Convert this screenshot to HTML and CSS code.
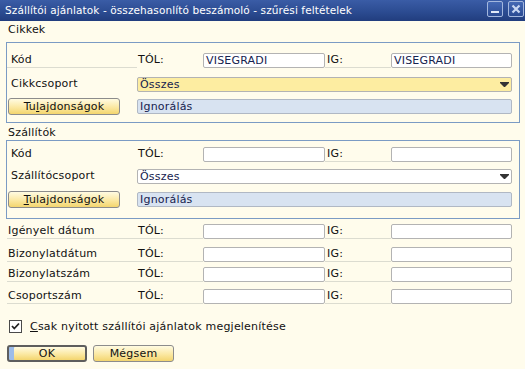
FILE: index.html
```html
<!DOCTYPE html>
<html lang="hu">
<head>
    <meta charset="UTF-8">
    <title>Szállítói ajánlatok - szűrési feltételek</title>
    <link rel="stylesheet" href="styles.css">
</head>
<body>
    <div class="window">
        <div class="titlebar">
            <span class="title">Szállítói ajánlatok - összehasonlító beszámoló - szűrési feltételek</span>
            <div class="tb-btns">
                <span class="tb-btn tb-min"></span>
                <span class="tb-btn tb-close">
                    <svg width="14" height="14" viewBox="0 0 14 14"><path d="M3.5 3.5 L10.5 10.5 M10.5 3.5 L3.5 10.5" stroke="#c8d6f2" stroke-width="2.2"/></svg>
                </span>
            </div>
        </div>

        <div class="section-title first">Cikkek</div>
        <div class="group group-cikk">
            <div class="row">
                <span class="lbl line">Kód</span>
                <span class="lbl tol">TÓL:</span>
                <span class="field">VISEGRADI</span>
                <span class="lbl ig line">IG:</span>
                <span class="field">VISEGRADI</span>
            </div>
            <div class="row gap-9">
                <span class="lbl">Cikkcsoport</span>
                <div class="field combo yellow wide">Összes
                    <svg class="arrow" width="9" height="5" viewBox="0 0 9 5"><path d="M0 0 H9 V1 L5 5 H4 L0 1 Z" fill="#333"/></svg>
                </div>
            </div>
            <div class="row tall gap-6">
                <button class="btn">Tu<u>l</u>ajdonságok</button>
                <div class="field blue wide">Ignorálás</div>
            </div>
        </div>

        <div class="section-title second">Szállítók</div>
        <div class="group group-szall">
            <div class="row">
                <span class="lbl">Kód</span>
                <span class="lbl tol">TÓL:</span>
                <span class="field"></span>
                <span class="lbl ig line">IG:</span>
                <span class="field"></span>
            </div>
            <div class="row gap-7">
                <span class="lbl">Szállítócsoport</span>
                <div class="field combo wide">Összes
                    <svg class="arrow" width="9" height="5" viewBox="0 0 9 5"><path d="M0 0 H9 V1 L5 5 H4 L0 1 Z" fill="#333"/></svg>
                </div>
            </div>
            <div class="row tall gap-7">
                <button class="btn"><u>T</u>ulajdonságok</button>
                <div class="field blue wide">Ignorálás</div>
            </div>
        </div>

        <div class="free-rows">
            <div class="row">
                <span class="lbl line">Igényelt dátum</span>
                <span class="lbl tol line">TÓL:</span>
                <span class="field"></span>
                <span class="lbl ig line">IG:</span>
                <span class="field"></span>
            </div>
            <div class="row gap-8">
                <span class="lbl line">Bizonylatdátum</span>
                <span class="lbl tol line">TÓL:</span>
                <span class="field"></span>
                <span class="lbl ig line">IG:</span>
                <span class="field"></span>
            </div>
            <div class="row gap-5">
                <span class="lbl line">Bizonylatszám</span>
                <span class="lbl tol line">TÓL:</span>
                <span class="field"></span>
                <span class="lbl ig line">IG:</span>
                <span class="field"></span>
            </div>
            <div class="row gap-7">
                <span class="lbl line">Csoportszám</span>
                <span class="lbl tol line">TÓL:</span>
                <span class="field"></span>
                <span class="lbl ig line">IG:</span>
                <span class="field"></span>
            </div>
        </div>

        <label class="check-row">
            <span class="checkbox">
                <svg width="13" height="13" viewBox="0 0 13 13"><path d="M3 6 L5.3 8.5 L10 3.5" stroke="#222" stroke-width="1.8" fill="none"/></svg>
            </span>
            <span><u>C</u>sak nyitott szállítói ajánlatok megjelenítése</span>
        </label>

        <div class="actions">
            <button class="btn btn-ok">OK</button>
            <button class="btn btn-cancel">Mégsem</button>
        </div>
    </div>
</body>
</html>
```

FILE: styles.css
```css
body {
    margin: 0;
    font-family: "DejaVu Sans", sans-serif;
    font-size: 11px;
    letter-spacing: 0.2px;
    color: #111;
    background-color: #fffcec;
}

.window {
    width: 525px;
    height: 369px;
    overflow: hidden;
    background-color: #fffcec;
}

/* title bar */
.titlebar {
    height: 21px;
    box-sizing: border-box;
    padding: 0 1px 0 5px;
    display: flex;
    justify-content: space-between;
    background: linear-gradient(#3a5ca6, #2c4c92 55%, #213d7e);
    color: #fff;
}

.title {
    font-size: 10.5px;
    letter-spacing: 0.1px;
    line-height: 21px;
}

.tb-btns {
    display: flex;
    gap: 5px;
    margin-top: 1px;
}

.tb-btn {
    position: relative;
    width: 14px;
    height: 14px;
    border: 1px solid #a3b7de;
    border-radius: 2px;
    background: linear-gradient(#4468b4, #2b4b93);
}

.tb-min::after {
    content: "";
    position: absolute;
    left: 3px;
    bottom: 3px;
    width: 8px;
    height: 2px;
    background-color: #e2eaf8;
}

.tb-close svg {
    display: block;
}

/* sections */
.section-title {
    box-sizing: border-box;
    padding: 2px 0 0 8px;
    line-height: 14px;
}

.section-title.first {
    height: 21px;
}

.section-title.second {
    height: 17px;
    padding-top: 3px;
}

.group {
    margin: 0 5px 0 6px;
    border: 1px solid #7b9bc4;
}

.group-cikk {
    padding: 10px 0 7px;
}

.group-szall {
    padding: 6px 0 10px;
}

.free-rows {
    padding: 5px 0 0 7px;
}

/* grid rows */
.row {
    display: grid;
    grid-template-columns: 130px 66px 122px 66px 121px;
    height: 15px;
    align-items: center;
}

.row.tall {
    height: 17px;
}

.gap-5 { margin-top: 5px; }
.gap-6 { margin-top: 6px; }
.gap-7 { margin-top: 7px; }
.gap-8 { margin-top: 8px; }
.gap-9 { margin-top: 9px; }

.lbl {
    height: 15px;
    box-sizing: border-box;
    line-height: 14px;
    white-space: nowrap;
    padding-left: 1px;
}

.group .lbl:first-child {
    padding-left: 4px;
}

.lbl.tol {
    padding-left: 1px;
}

.lbl.ig {
    padding-left: 2px;
}

.line {
    border-bottom: 1px solid #dcdcd0;
}

.field {
    height: 15px;
    box-sizing: border-box;
    border: 1px solid #b3b3b3;
    border-radius: 2px;
    background-color: #fff;
    padding-left: 2px;
    line-height: 13px;
    color: #16224f;
    white-space: nowrap;
}

.wide {
    grid-column: 2 / span 4;
}

.combo {
    position: relative;
}

.combo .arrow {
    position: absolute;
    right: 2px;
    top: 4px;
}

.yellow {
    background-color: #fdeda1;
}

.blue {
    background-color: #d8e3f1;
    border-color: #b0b8c4;
}

/* buttons */
.btn {
    width: 112px;
    height: 17px;
    margin-left: 1px;
    padding: 0;
    border: 1px solid #8c8c8c;
    border-radius: 3px;
    background: linear-gradient(#fffbe2, #fbe8a2 55%, #f3d56e);
    font: inherit;
    letter-spacing: 0.2px;
    color: #111;
    line-height: 14px;
}

.check-row {
    display: flex;
    align-items: center;
    gap: 8px;
    height: 13px;
    margin-top: 16px;
    padding-left: 9px;
}

.checkbox {
    width: 13px;
    height: 13px;
    box-sizing: border-box;
    border: 1px solid #4a4a4a;
    background-color: #fff;
}

.checkbox svg {
    display: block;
    margin: -1px;
}

.actions {
    display: flex;
    gap: 6px;
    margin-top: 12px;
    padding-left: 7px;
}

.btn-ok {
    width: 80px;
    margin-left: 0;
    border: 2px solid #5e5e5e;
    box-shadow: inset 5px 0 0 #9dbce9;
}

.btn-cancel {
    width: 81px;
    margin-left: 0;
}
```
